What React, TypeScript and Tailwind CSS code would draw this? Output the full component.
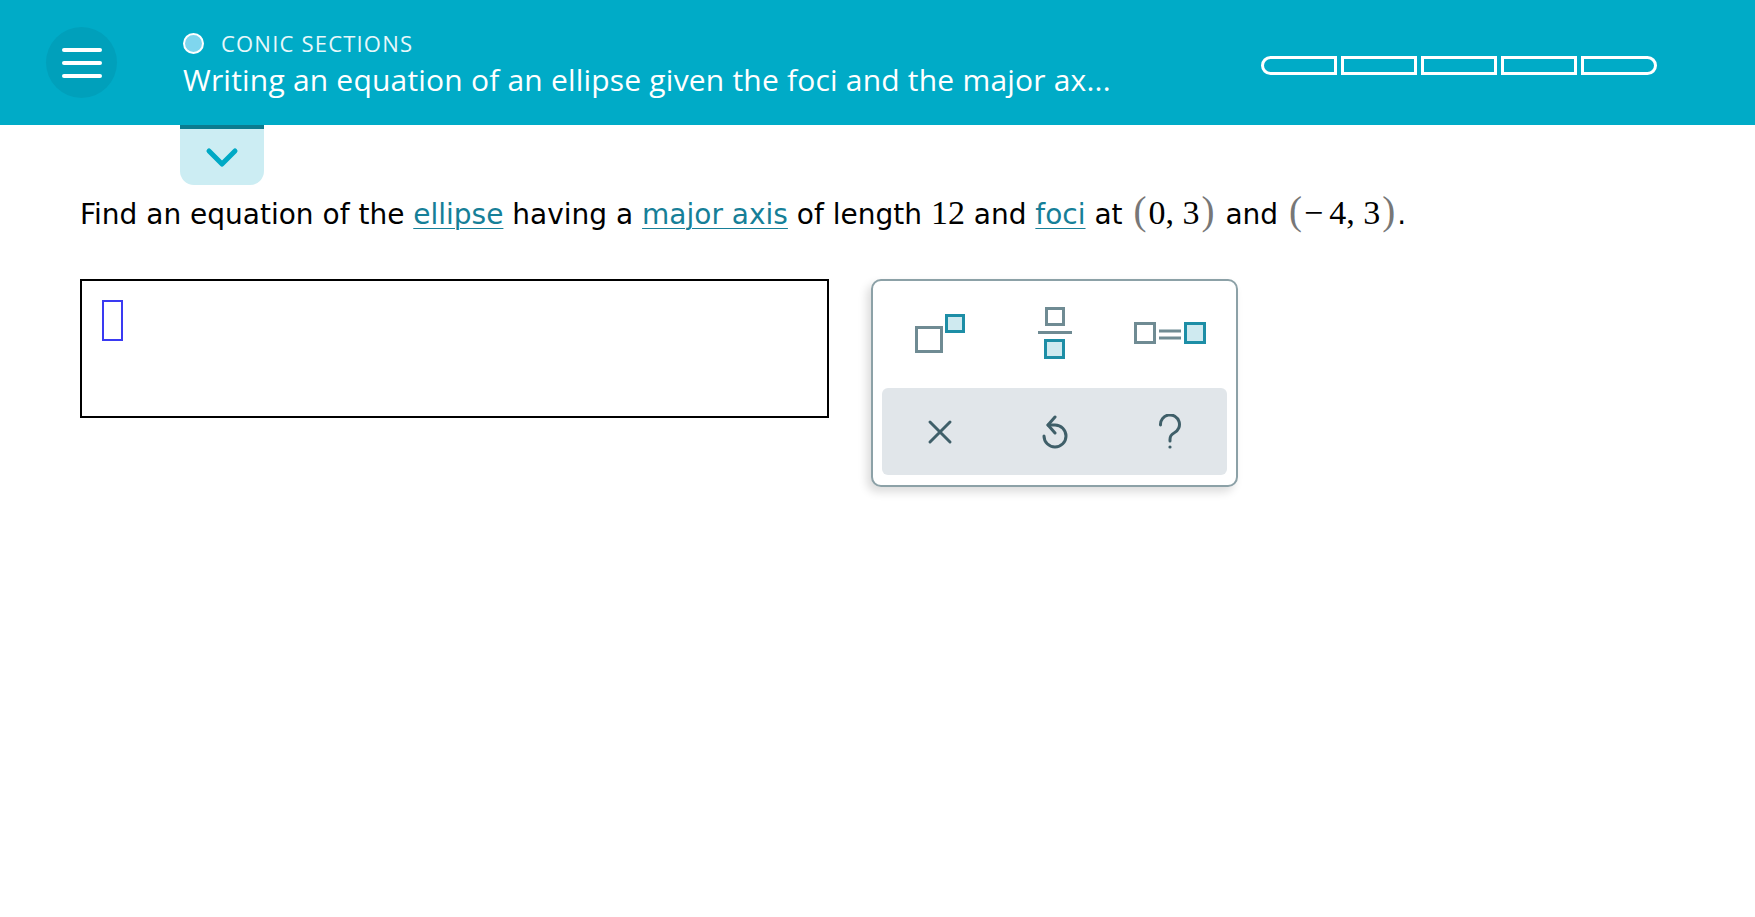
import React from "react";

const sans = { fontFamily: "'Open Sans', Lato, sans-serif" };
const verdana = { fontFamily: "'DejaVu Sans', Verdana, sans-serif" };
const serif = { fontFamily: "'Liberation Serif', 'Times New Roman', serif" };

function ProgressBar() {
  const segs = [0, 1, 2, 3, 4];
  return (
    <div className="ml-auto mr-[98px] mt-[56px] self-start flex gap-[4px]">
      {segs.map((i) => (
        <div
          key={i}
          className={`h-[19px] w-[76px] border-[3px] border-white ${
            i === 0 ? "rounded-l-full" : i === 4 ? "rounded-r-full" : ""
          }`}
        />
      ))}
    </div>
  );
}

function Header() {
  return (
    <header className="flex h-[125px] items-center bg-[#00abc7]" style={sans}>
      <button className="ml-[46px] flex h-[71px] w-[71px] flex-col items-center justify-center gap-[9px] rounded-full bg-[#00a0bb]">
        <span className="h-[4px] w-[40px] rounded-full bg-white" />
        <span className="h-[4px] w-[40px] rounded-full bg-white" />
        <span className="h-[4px] w-[40px] rounded-full bg-white" />
      </button>
      <div className="ml-[66px] self-start pt-[31px]">
        <div className="flex h-[24px] items-center gap-[17px]">
          <span className="h-[21px] w-[21px] rounded-full border-2 border-white bg-[#7fd6ee]" />
          <span className="text-[22px] leading-[24px] tracking-[1.2px] text-[#e8f8fb]">CONIC SECTIONS</span>
        </div>
        <div className="mt-[6px] text-[30px] leading-[38px] tracking-[0.2px] text-white">
          Writing an equation of an ellipse given the foci and the major ax...
        </div>
      </div>
      <ProgressBar />
    </header>
  );
}

function Link({ children }: { children: React.ReactNode }) {
  return <span className="text-[#167f98] underline decoration-1 underline-offset-[4px]">{children}</span>;
}

function Paren({ children }: { children: React.ReactNode }) {
  return <span className="mx-[2px] text-[39px] leading-[32px] text-[#777777]" style={serif}>{children}</span>;
}

function MathNum({ children }: { children: React.ReactNode }) {
  return <span className="text-[34px] leading-[32px]" style={serif}>{children}</span>;
}

function Question() {
  return (
    <p className="ml-[80px] mt-[10px] text-[28px] leading-[32px] text-black" style={verdana}>
      Find an equation of the <Link>ellipse</Link> having a <Link>major axis</Link> of length{" "}
      <MathNum>12</MathNum> and <Link>foci</Link> at{" "}
      <Paren>(</Paren>
      <MathNum>0, 3</MathNum>
      <Paren>)</Paren> and{" "}
      <Paren>(</Paren>
      <MathNum>
        <span className="mr-[6px]">−</span>4, 3
      </MathNum>
      <Paren>)</Paren>.
    </p>
  );
}

function SuperscriptIcon() {
  return (
    <svg width="50" height="39" viewBox="0 0 50 39">
      <rect x="1.5" y="13.5" width="25" height="24" fill="none" stroke="#6f8b93" strokeWidth="3" />
      <rect x="31.5" y="1.5" width="17" height="16" fill="#cfeaf0" stroke="#1d8ea6" strokeWidth="3" />
    </svg>
  );
}

function FractionIcon() {
  return (
    <svg width="34" height="52" viewBox="0 0 34 52">
      <rect x="8.5" y="1.5" width="17" height="16" fill="none" stroke="#6f8b93" strokeWidth="3" />
      <rect x="0" y="24" width="34" height="3" fill="#6f8b93" />
      <rect x="7.5" y="33.5" width="18" height="17" fill="#cfeaf0" stroke="#1d8ea6" strokeWidth="3" />
    </svg>
  );
}

function EqualsIcon() {
  return (
    <svg width="72" height="22" viewBox="0 0 72 22">
      <rect x="1.5" y="1.5" width="19" height="19" fill="none" stroke="#6f8b93" strokeWidth="3" />
      <rect x="25" y="7.5" width="22" height="3" fill="#6f8b93" />
      <rect x="25" y="14.5" width="22" height="3" fill="#6f8b93" />
      <rect x="51.5" y="1.5" width="19" height="19" fill="#cfeaf0" stroke="#1d8ea6" strokeWidth="3" />
    </svg>
  );
}

function ClearIcon() {
  return (
    <svg width="26" height="26" viewBox="0 0 26 26" fill="none" stroke="#3f5f69" strokeWidth="3" strokeLinecap="round">
      <path d="M3 3 L23 23 M23 3 L3 23" />
    </svg>
  );
}

function UndoIcon() {
  return (
    <svg width="28" height="34" viewBox="0 0 28 34" fill="none" stroke="#3f5f69" strokeWidth="3" strokeLinecap="round" strokeLinejoin="round">
      <path d="M3 21 A11 11 0 1 0 14 10 H7" />
      <path d="M14 2 L7 10 L14 18" />
    </svg>
  );
}

function HelpIcon() {
  return (
    <svg width="26" height="36" viewBox="0 0 26 36" fill="none" stroke="#3f5f69" strokeWidth="3" strokeLinecap="round">
      <path d="M3.5 11 A9.5 9.5 0 1 1 17 19 C14 20.5 13 22.5 13 25.5 V27" />
      <circle cx="13" cy="33" r="1.6" fill="#3f5f69" stroke="none" />
    </svg>
  );
}

function Keypad() {
  return (
    <div className="ml-[42px] h-[208px] w-[367px] rounded-[10px] border-2 border-[#8ca1a7] bg-white shadow-[-4px_5px_10px_rgba(0,0,0,0.14)]">
      <div className="grid h-[107px] grid-cols-3 px-[9px] pb-[3px]">
        <button className="flex items-center justify-center">
          <SuperscriptIcon />
        </button>
        <button className="flex items-center justify-center">
          <FractionIcon />
        </button>
        <button className="flex items-center justify-center">
          <EqualsIcon />
        </button>
      </div>
      <div className="mx-[9px] grid h-[87px] grid-cols-3 rounded-[6px] bg-[#e1e6ea]">
        <button className="flex items-center justify-center">
          <ClearIcon />
        </button>
        <button className="flex items-center justify-center">
          <UndoIcon />
        </button>
        <button className="flex items-center justify-center">
          <HelpIcon />
        </button>
      </div>
    </div>
  );
}

export default function App() {
  return (
    <div className="min-h-[917px] bg-white">
      <Header />
      <div className="ml-[180px] flex h-[60px] w-[84px] items-center justify-center rounded-b-[14px] border-t-4 border-[#0b7b8f] bg-[#ccedf3]">
        <svg width="34" height="22" viewBox="0 0 34 22" fill="none" stroke="#00a9c5" strokeWidth="5" strokeLinecap="round" strokeLinejoin="round">
          <path d="M4 5 L17 18 L30 5" />
        </svg>
      </div>
      <Question />
      <div className="mt-[48px] flex items-start">
        <div className="ml-[80px] h-[139px] w-[749px] border-2 border-black pl-[20px] pt-[19px]">
          <div className="h-[41px] w-[21px] border-2 border-[#3a3af2]" />
        </div>
        <Keypad />
      </div>
    </div>
  );
}
